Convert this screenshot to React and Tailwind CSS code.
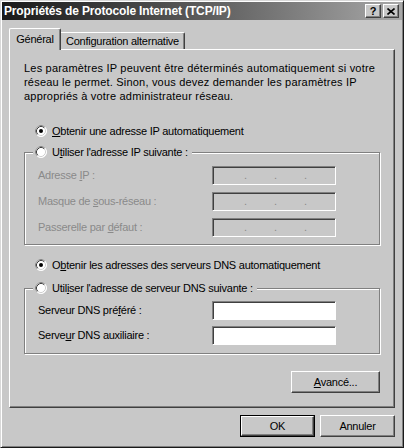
import React from 'react';

const Radio = ({ checked }) => (
  <svg width="12" height="12" viewBox="0 0 12 12" className="shrink-0">
    <circle cx="6" cy="6" r="5.5" fill="#fff" stroke="#fff" />
    <path d="M2.11 9.89 A5.5 5.5 0 0 1 9.89 2.11" fill="none" stroke="#808080" />
    <path d="M2.82 9.18 A4.5 4.5 0 0 1 9.18 2.82" fill="none" stroke="#404040" />
    <path d="M9.18 2.82 A4.5 4.5 0 0 1 2.82 9.18" fill="none" stroke="#d0d0d0" />
    {checked && <circle cx="6" cy="6" r="2" fill="#000" />}
  </svg>
);

const raised =
  'flex items-center justify-center bg-[#c8c8c8] border border-t-white border-l-white border-r-[#404040] border-b-[#404040] shadow-[inset_-1px_-1px_0_#808080]';

const sunken =
  'h-[19px] w-[124px] border border-t-[#808080] border-l-[#808080] border-r-white border-b-white shadow-[inset_1px_1px_0_#404040]';

// champ IP désactivé, avec ses trois points
const IpField = () => (
  <div className={`${sunken} flex items-center pl-[31px] gap-[27px] leading-[17px] text-[#8a8a8a]`}>
    <span className="w-[3px]">.</span>
    <span className="w-[3px]">.</span>
    <span className="w-[3px]">.</span>
  </div>
);

const App = () => {
  return (
    <div className="w-[404px] h-[448px] bg-[#c8c8c8] font-['Liberation_Sans',Arial,sans-serif] text-[11px] tracking-[-0.25px] text-black border border-t-[#d8d8d8] border-l-[#d8d8d8] border-r-[#1a1a1a] border-b-[#1a1a1a] shadow-[inset_1px_1px_0_#fff,inset_-1px_-1px_0_#808080] p-px flex flex-col">
      {/* Title bar */}
      <div className="h-[18px] flex items-center justify-between pl-[2px] pr-[3px] bg-linear-to-r from-[#1a1a1a] to-[#a8a8a8]">
        <span className="text-white font-bold text-[12px] tracking-[-0.15px] leading-none">Propriétés de Protocole Internet (TCP/IP)</span>
        <div className="flex gap-[2px]">
          <div className={`${raised} w-[16px] h-[14px] font-bold text-[11px] leading-none`}>?</div>
          <div className={`${raised} w-[16px] h-[14px]`}>
            <svg width="8" height="7" viewBox="0 0 8 7">
              <path d="M0.5 0.5 L7.5 6.5 M7.5 0.5 L0.5 6.5" stroke="#000" strokeWidth="1.6" />
            </svg>
          </div>
        </div>
      </div>

      {/* Tabs */}
      <div className="mt-[8px] px-[7px] h-[21px] flex items-end whitespace-nowrap">
        <div className="relative z-10 h-[22px] -mb-px w-[52px] flex items-center justify-center bg-[#c8c8c8] border-t border-l border-r border-t-white border-l-white border-r-[#404040] rounded-t-[2px] shadow-[inset_-1px_0_0_#808080]">
          Général
        </div>
        <div className="h-[17px] w-[124px] flex items-center pl-[5px] border-t border-r border-t-white border-r-[#404040] rounded-tr-[2px] shadow-[inset_-1px_0_0_#808080]">
          Configuration alternative
        </div>
      </div>

      {/* Panel */}
      <div className="mx-[7px] border border-t-white border-l-white border-r-[#404040] border-b-[#404040] shadow-[inset_-1px_-1px_0_#808080] pt-[11px] px-[14px] pb-[14px] flex flex-col">
        <p className="leading-[14px] tracking-[0.2px] whitespace-nowrap">
          Les paramètres IP peuvent être déterminés automatiquement si votre
          <br />
          réseau le permet. Sinon, vous devez demander les paramètres IP
          <br />
          appropriés à votre administrateur réseau.
        </p>

        <div className="mt-[21px] h-[14px] pl-[11px] flex items-center gap-[5px]">
          <Radio checked />
          <span>
            <u>O</u>btenir une adresse IP automatiquement
          </span>
        </div>

        <fieldset className="mt-[7px] px-[8px] pt-[7px] pb-[7px] border border-[#808080] shadow-[inset_1px_1px_0_#fff,1px_1px_0_#fff]">
          <legend className="px-[2px] bg-[#c8c8c8]">
            <span className="h-[14px] flex items-center gap-[5px] pr-[2px]">
              <Radio />
              <span>
                U<u>t</u>iliser l'adresse IP suivante :
              </span>
            </span>
          </legend>
          <div className="pl-[5px] grid grid-cols-[174px_124px] gap-y-[7px] items-center text-[#8a8a8a]">
            <span>
              Adresse <u>I</u>P :
            </span>
            <IpField />
            <span>
              Masque de <u>s</u>ous-réseau :
            </span>
            <IpField />
            <span>
              Passerelle par <u>d</u>éfaut :
            </span>
            <IpField />
          </div>
        </fieldset>

        <div className="mt-[13px] h-[14px] pl-[11px] flex items-center gap-[5px]">
          <Radio checked />
          <span>
            O<u>b</u>tenir les adresses des serveurs DNS automatiquement
          </span>
        </div>

        <fieldset className="mt-[9px] px-[8px] pt-[6px] pb-[8px] border border-[#808080] shadow-[inset_1px_1px_0_#fff,1px_1px_0_#fff]">
          <legend className="px-[2px] bg-[#c8c8c8]">
            <span className="h-[14px] flex items-center gap-[5px] pr-[2px]">
              <Radio />
              <span>
                Util<u>i</u>ser l'adresse de serveur DNS suivante :
              </span>
            </span>
          </legend>
          <div className="pl-[5px] grid grid-cols-[174px_124px] gap-y-[6px] items-center">
            <span>
              Serveur DNS pré<u>f</u>éré :
            </span>
            <div className={`${sunken} bg-white`} />
            <span>
              Serve<u>u</u>r DNS auxiliaire :
            </span>
            <div className={`${sunken} bg-white`} />
          </div>
        </fieldset>

        <div className="mt-[17px] flex justify-end">
          <div className={`${raised} w-[89px] h-[22px]`}>
            <span>
              <u>A</u>vancé...
            </span>
          </div>
        </div>
      </div>

      {/* Buttons */}
      <div className="mt-[7px] pr-[7px] flex justify-end gap-[5px]">
        <div className="border border-black">
          <div className={`${raised} w-[73px] h-[20px]`}>OK</div>
        </div>
        <div className={`${raised} w-[75px] h-[22px]`}>Annuler</div>
      </div>
    </div>
  );
};

export default App;
